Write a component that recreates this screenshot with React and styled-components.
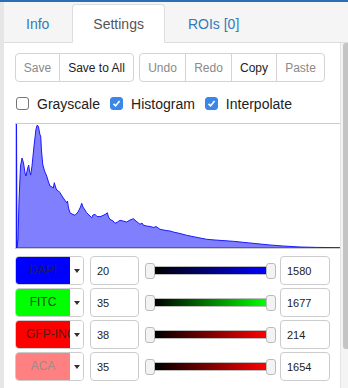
import styled, { createGlobalStyle } from "styled-components";

const GlobalStyle = createGlobalStyle`
  html, body {
    margin: 0;
    padding: 0;
    background: #fff;
    font-family: "Liberation Sans", Arial, sans-serif;
  }
`;

const Frame = styled.div`
  width: 348px;
  height: 388px;
  box-sizing: border-box;
  border-top: 2px solid #2d6db4;
  display: flex;
  overflow: hidden;
`;

const Gutter = styled.div`
  width: 4px;
  background: #e6e6e6;
`;

const Main = styled.div`
  flex: 1;
  display: flex;
  flex-direction: column;
  min-width: 0;
`;

const TabBar = styled.div`
  height: 41px;
  box-sizing: border-box;
  background: #f5f5f5;
  border-bottom: 1px solid #ddd;
  display: flex;
  align-items: flex-end;
  padding-left: 1px;
`;

const Tab = styled.div`
  height: 39px;
  box-sizing: border-box;
  padding: 0 20px;
  margin-right: 2px;
  margin-bottom: -1px;
  display: flex;
  align-items: center;
  font-size: 14px;
  border: 1px solid ${(p) => (p.$active ? "#ddd" : "transparent")};
  border-bottom-color: transparent;
  border-radius: 4px 4px 0 0;
  background: ${(p) => (p.$active ? "#fff" : "transparent")};
  color: ${(p) => (p.$active ? "#555" : "#337ab7")};
`;

const Body = styled.div`
  flex: 1;
  display: flex;
  min-height: 0;
`;

const Panel = styled.div`
  flex: 1;
  padding: 10px 0 0 11px;
  overflow: hidden;
  display: flex;
  flex-direction: column;
`;

const Scrollbar = styled.div`
  width: 8px;
  box-sizing: border-box;
  border-left: 1px solid #e4e4e4;
  background: #f4f4f4;
  padding-left: 2px;
`;

const Thumb = styled.div`
  width: 5px;
  height: 306px;
  background: #c4c4c4;
  border-radius: 3px 0 0 3px;
`;

const Toolbar = styled.div`
  display: flex;
  gap: 5px;
`;

const BtnGroup = styled.div`
  display: flex;
`;

const Btn = styled.div`
  height: 29px;
  box-sizing: border-box;
  padding: 0 8px;
  display: flex;
  align-items: center;
  justify-content: center;
  width: ${(p) => p.$w}px;
  font-size: 12px;
  color: ${(p) => (p.$muted ? "#8a8a8a" : "#222")};
  background: #fff;
  border: 1px solid #d4d4d4;
  margin-left: -1px;
  &:first-child {
    margin-left: 0;
    border-radius: 4px 0 0 4px;
  }
  &:last-child {
    border-radius: 0 4px 4px 0;
  }
`;

const Checks = styled.div`
  display: flex;
  align-items: center;
  margin-top: 13px;
  padding-left: 1px;
  height: 17px;
`;

const CheckLabel = styled.label`
  display: flex;
  align-items: center;
  gap: 8px;
  margin-right: 10px;
  font-size: 14px;
  color: #222;
`;

const Box = styled.span`
  width: 13px;
  height: 13px;
  box-sizing: border-box;
  border-radius: 3px;
  border: 1px solid ${(p) => (p.$checked ? "#3a87e8" : "#767676")};
  background: ${(p) => (p.$checked ? "#3a87e8" : "#fff")};
  display: flex;
  align-items: center;
  justify-content: center;
`;

const Histogram = styled.div`
  margin-top: 11px;
  width: 340px;
  height: 126px;
  box-sizing: border-box;
  border: 1px solid #cbcbcb;
  flex-shrink: 0;
  svg {
    display: block;
  }
`;

const Channels = styled.div`
  margin-top: 7px;
  display: flex;
  flex-direction: column;
  gap: 3px;
`;

const Row = styled.div`
  display: flex;
  align-items: center;
  height: 29px;
`;

const Select = styled.div`
  width: 69px;
  height: 29px;
  box-sizing: border-box;
  border: 1px solid #ccc;
  border-radius: 4px;
  overflow: hidden;
  display: flex;
  flex-shrink: 0;
`;

const Swatch = styled.div`
  width: 54px;
  padding: 0 10px;
  box-sizing: border-box;
  line-height: 27px;
  text-align: center;
  white-space: nowrap;
  overflow: hidden;
  font-size: 12px;
  background: ${(p) => p.$bg};
  color: ${(p) => p.$fg};
`;

const Caret = styled.div`
  flex: 1;
  display: flex;
  align-items: center;
  justify-content: center;
  background: #fff;
  &::after {
    content: "";
    border-left: 3.5px solid transparent;
    border-right: 3.5px solid transparent;
    border-top: 4px solid #333;
  }
`;

const NumBox = styled.div`
  width: ${(p) => p.$w}px;
  height: 29px;
  box-sizing: border-box;
  margin-left: ${(p) => p.$ml}px;
  border: 1px solid #ccc;
  border-radius: 4px;
  padding-left: 6px;
  display: flex;
  align-items: center;
  font-size: 11px;
  color: #222;
  flex-shrink: 0;
`;

const Slider = styled.div`
  width: 131px;
  margin-left: 6px;
  height: 16px;
  display: flex;
  align-items: center;
  flex-shrink: 0;
`;

const Knob = styled.div`
  width: 10px;
  height: 16px;
  box-sizing: border-box;
  border: 1px solid #bbb;
  border-radius: 3px;
  background: #f3f3f3;
  flex-shrink: 0;
`;

const Track = styled.div`
  flex: 1;
  height: 9px;
  box-sizing: border-box;
  border-top: 1px solid #bdbdbd;
  border-bottom: 1px solid #bdbdbd;
  background: linear-gradient(to right, #000, ${(p) => p.$color});
`;

const channels = [
  { name: "DAPI", bg: "#0000ff", fg: "#1c1c66", color: "#0000ff", lo: 20, hi: 1580 },
  { name: "FITC", bg: "#00ff00", fg: "#1f4a1f", color: "#00ff00", lo: 35, hi: 1677 },
  { name: "GFP-INC", bg: "#ff0000", fg: "#5a1616", color: "#ff0000", lo: 38, hi: 214 },
  { name: "ACA", bg: "#ff8080", fg: "#a08a8a", color: "#ff0000", lo: 35, hi: 1654 },
];

const pts = [
  [17, 247], [18, 238], [19, 200], [20.5, 165], [22, 157], [23.5, 162], [25, 172], [26, 175],
  [27.5, 168], [28.7, 164], [29.5, 170], [30.7, 174], [32, 165], [34, 145], [36, 128],
  [37.3, 124], [38.5, 126], [40, 134], [40.7, 135], [41.5, 150], [42.7, 163], [44.5, 170],
  [46.7, 175], [48.5, 181], [50, 185], [52, 186], [53.3, 187], [54.3, 181.7], [55.5, 186],
  [56.7, 189], [58.5, 190], [60, 191.7], [62, 195], [64, 198], [66.7, 201.7], [67.5, 200],
  [68.5, 207], [70, 211.7], [72, 213], [75, 214.3], [78, 211], [80.5, 206], [81.7, 202.3],
  [83, 206], [86.7, 211.7], [89, 214], [91.7, 216.7], [93, 214], [95, 213.3], [97, 215.5],
  [100, 215.7], [103, 214.5], [106, 213], [107.3, 211.7], [108.5, 216], [110, 218.3],
  [113, 220], [115, 222.3], [117.5, 221], [120, 219.3], [123, 220], [126.7, 221], [130, 219],
  [133.3, 217.7], [136, 220], [140, 223.3], [142, 222], [143, 224], [146.7, 225], [150, 225.5],
  [154, 226.5], [156, 225.5], [160, 228.3], [166, 229.5], [170, 230], [173.3, 231], [180, 232.5],
  [186.7, 234.3], [195, 236], [206.7, 238.3], [215, 239], [222, 239.5], [233.3, 240.3],
  [245, 241.5], [260, 243], [270, 244], [283.3, 245], [300, 246], [316.7, 246.4], [340, 246.7],
];

const histPath =
  "M16.5,247 L16.5,123 L17,247 " +
  pts.map(([x, y]) => `L${x},${y}`).join(" ") +
  " L340,247 Z";

function CheckBox({ checked, label }) {
  return (
    <CheckLabel>
      <Box $checked={checked}>
        {checked && (
          <svg width="9" height="9" viewBox="0 0 9 9">
            <path d="M1.5 4.8 L3.6 6.8 L7.6 2" fill="none" stroke="#fff" strokeWidth="1.6" />
          </svg>
        )}
      </Box>
      {label}
    </CheckLabel>
  );
}

function ChannelRow({ ch }) {
  return (
    <Row>
      <Select>
        <Swatch $bg={ch.bg} $fg={ch.fg}>{ch.name}</Swatch>
        <Caret />
      </Select>
      <NumBox $w={49} $ml={6}>{ch.lo}</NumBox>
      <Slider>
        <Knob />
        <Track $color={ch.color} />
        <Knob />
      </Slider>
      <NumBox $w={50} $ml={4}>{ch.hi}</NumBox>
    </Row>
  );
}

export default function App() {
  return (
    <>
      <GlobalStyle />
      <Frame>
        <Gutter />
        <Main>
          <TabBar>
            <Tab>Info</Tab>
            <Tab $active>Settings</Tab>
            <Tab>ROIs [0]</Tab>
          </TabBar>
          <Body>
            <Panel>
              <Toolbar>
                <BtnGroup>
                  <Btn $muted $w={45}>Save</Btn>
                  <Btn $w={75}>Save to All</Btn>
                </BtnGroup>
                <BtnGroup>
                  <Btn $muted $w={47}>Undo</Btn>
                  <Btn $muted $w={47}>Redo</Btn>
                  <Btn $w={46}>Copy</Btn>
                  <Btn $muted $w={49}>Paste</Btn>
                </BtnGroup>
              </Toolbar>
              <Checks>
                <CheckBox label="Grayscale" />
                <CheckBox checked label="Histogram" />
                <CheckBox checked label="Interpolate" />
              </Checks>
              <Histogram>
                <svg width="338" height="124" viewBox="16 123 338 124">
                  <path d={histPath} fill="#8080ff" stroke="#1a1aff" strokeWidth="1" strokeLinejoin="round" />
                </svg>
              </Histogram>
              <Channels>
                {channels.map((ch) => (
                  <ChannelRow key={ch.name} ch={ch} />
                ))}
              </Channels>
            </Panel>
            <Scrollbar>
              <Thumb />
            </Scrollbar>
          </Body>
        </Main>
      </Frame>
    </>
  );
}
